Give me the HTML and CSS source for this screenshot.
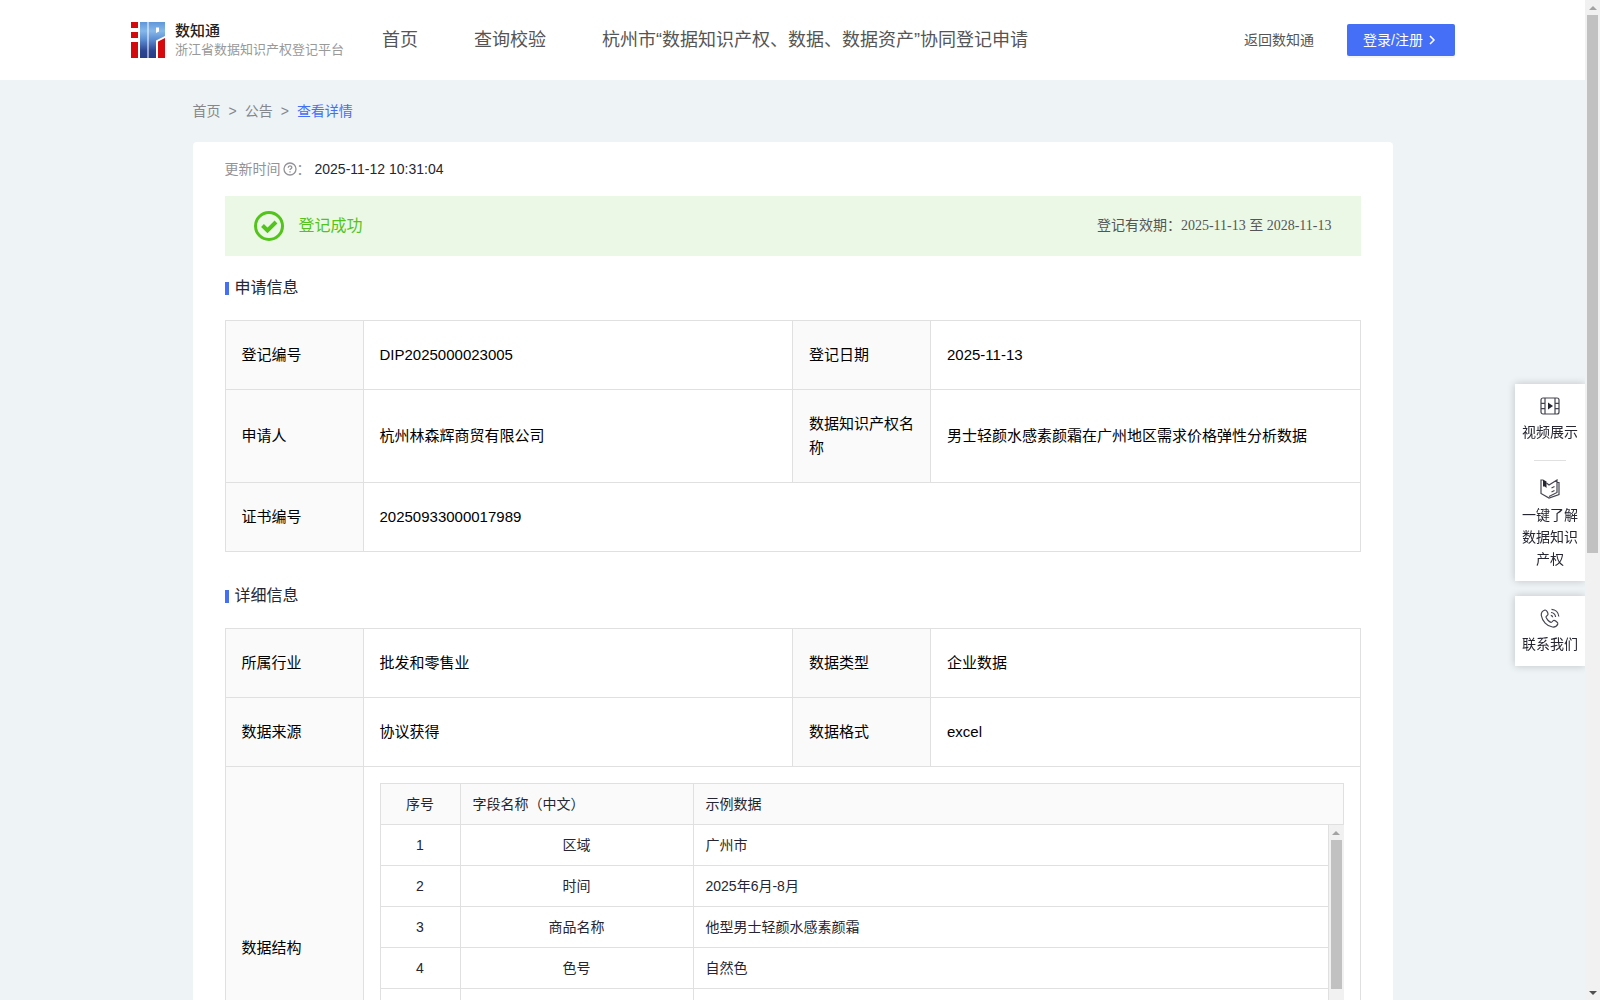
FILE: index.html
```html
<!DOCTYPE html>
<html lang="zh-CN">
<head>
    <meta charset="UTF-8">
    <meta name="viewport" content="width=device-width, initial-scale=1.0">
    <title>数知通 - 查看详情</title>
    <link rel="stylesheet" href="styles.css">
</head>
<body>
    <div class="page">
        <header class="header">
            <a class="logo" href="#">
                <svg class="logo-mark" viewBox="0 0 34 36" aria-hidden="true">
                    <defs>
                        <linearGradient id="blue" gradientUnits="userSpaceOnUse" x1="0" y1="0" x2="0" y2="36">
                            <stop offset="0" stop-color="#5f97d8"/>
                            <stop offset="0.25" stop-color="#86b8ea"/>
                            <stop offset="0.5" stop-color="#5a8bd0"/>
                            <stop offset="0.8" stop-color="#2c4592"/>
                            <stop offset="1" stop-color="#263c86"/>
                        </linearGradient>
                    </defs>
                    <path fill="#d40a0f" d="M0 0h7v6H0zM0 10h7v6H0zM0 20h7v16H0zM27 19.500l7-3.500v20h-7z"/>
                    <path fill="url(#blue)" d="M9 0h7.500v36H9z"/>
                    <path fill="url(#blue)" fill-rule="evenodd" d="M17.500 0H34v14l-9 4.500V36h-7.500zM25 5.500v5.500l3-1.500v-4z"/>
                </svg>
                <span class="logo-text">
                    <strong>数知通</strong>
                    <small>浙江省数据知识产权登记平台</small>
                </span>
            </a>
            <nav class="nav">
                <a href="#">首页</a>
                <a href="#">查询校验</a>
                <a href="#">杭州市“数据知识产权、数据、数据资产”协同登记申请</a>
            </nav>
            <a class="back" href="#">返回数知通</a>
            <button class="login" type="button">
                登录/注册
                <svg viewBox="0 0 12 12" aria-hidden="true"><path d="M3 2l4 4-4 4"/></svg>
            </button>
        </header>

        <div class="wrap">
            <nav class="breadcrumb">
                <a href="#">首页</a><span>&gt;</span><a href="#">公告</a><span>&gt;</span><a class="current" href="#">查看详情</a>
            </nav>

            <main class="card">
                <div class="update">
                    <span class="update-label">更新时间<svg viewBox="0 0 14 14" aria-hidden="true"><circle cx="7" cy="7" r="6"/><path d="M5.200 5.800c0-2.400 3.600-2.400 3.600-.2 0 1.200-1.800 1.200-1.800 2.500M7 9.300v1.200"/></svg>：</span>
                    <time>2025-11-12 10:31:04</time>
                </div>

                <div class="status">
                    <svg viewBox="0 0 30 30" aria-hidden="true"><circle cx="15" cy="15" r="13.500"/><path class="tick" d="M8.500 14.500l5 5 8.500-8.500"/></svg>
                    <strong>登记成功</strong>
                    <span class="validity">登记有效期：2025-11-13 至 2028-11-13</span>
                </div>

                <h2>申请信息</h2>
                <table class="info">
                    <tr>
                        <th scope="row">登记编号</th>
                        <td>DIP2025000023005</td>
                        <th scope="row">登记日期</th>
                        <td>2025-11-13</td>
                    </tr>
                    <tr>
                        <th scope="row">申请人</th>
                        <td>杭州林森辉商贸有限公司</td>
                        <th scope="row">数据知识产权名称</th>
                        <td>男士轻颜水感素颜霜在广州地区需求价格弹性分析数据</td>
                    </tr>
                    <tr>
                        <th scope="row">证书编号</th>
                        <td colspan="3">20250933000017989</td>
                    </tr>
                </table>

                <h2>详细信息</h2>
                <table class="info">
                    <tr>
                        <th scope="row">所属行业</th>
                        <td>批发和零售业</td>
                        <th scope="row">数据类型</th>
                        <td>企业数据</td>
                    </tr>
                    <tr>
                        <th scope="row">数据来源</th>
                        <td>协议获得</td>
                        <th scope="row">数据格式</th>
                        <td>excel</td>
                    </tr>
                    <tr>
                        <th scope="row">数据结构</th>
                        <td class="nested" colspan="3">
                            <table class="fields">
                                <tr><th scope="col">序号</th><th scope="col">字段名称（中文）</th><th scope="col">示例数据</th></tr>
                            </table>
                            <div class="fields-body">
                                <table class="fields">
                                    <tr><td>1</td><td>区域</td><td>广州市</td></tr>
                                    <tr><td>2</td><td>时间</td><td>2025年6月-8月</td></tr>
                                    <tr><td>3</td><td>商品名称</td><td>他型男士轻颜水感素颜霜</td></tr>
                                    <tr><td>4</td><td>色号</td><td>自然色</td></tr>
                                    <tr><td></td><td></td><td></td></tr>
                                    <tr><td></td><td></td><td></td></tr>
                                    <tr><td></td><td></td><td></td></tr>
                                </table>
                                <div class="scrollbar" aria-hidden="true">
                                    <i class="arrow-up"></i>
                                    <div class="track"><div class="thumb thumb-fields"></div></div>
                                    <i class="arrow-down"></i>
                                </div>
                            </div>
                        </td>
                    </tr>
                </table>
            </main>
        </div>

        <aside class="side">
            <div class="side-box">
                <a href="#">
                    <svg viewBox="0 0 20 20" aria-hidden="true">
                        <rect x="1" y="2" width="18" height="16" rx="2"/>
                        <path d="M5 2v16M15 2v16M1 7.300h4M1 12.700h4M15 7.300h4M15 12.700h4"/>
                        <path class="solid" d="M8 6.500l5 3.500-5 3.500z"/>
                    </svg>
                    视频展示
                </a>
                <hr>
                <a href="#">
                    <svg viewBox="0 0 20 20" aria-hidden="true">
                        <path d="M3 1H1v13.500l8 4.500 10-3.500V3.500h-2M6.500 4L9 6l8-5v12.500L9 17.500M11.500 9l3-1.500M11.500 13l3-1.500"/>
                        <path class="solid" d="M3 .5l3.500 2V9L4.800 7.500 3 7.500z"/>
                    </svg>
                    一键了解数据知识产权
                </a>
            </div>
            <div class="side-box">
                <a href="#">
                    <svg viewBox="0 0 20 20" aria-hidden="true">
                        <path d="M5 2C2 3 1 5 1.300 7.500 2.200 13 7 18.300 12.500 19c2.500.2 4.500-.8 5.300-3 .4-1.500-3-4-4.300-3.500-1.200.5-1.300 2-2.500 1.800C9 13.800 6.500 11 6 9.200c-.2-1.300 1.800-1.500 2-2.700C8.200 5 6.500 1.800 5 2z"/>
                        <path d="M11 4.500c2.500.2 4.300 2 4.600 4.500M11.500 1.300c4 .2 7 3 7.300 7.200M10.800 7.300c1 .1 1.800.9 1.900 2"/>
                    </svg>
                    联系我们
                </a>
            </div>
        </aside>
    </div>

    <div class="scrollbar" aria-hidden="true">
        <i class="arrow-up"></i>
        <div class="track"><div class="thumb thumb-page"></div></div>
        <i class="arrow-down"></i>
    </div>
</body>
</html>
```
FILE: styles.css
```css
* {
    margin: 0;
    padding: 0;
    box-sizing: border-box;
}

body {
    display: flex;
    height: 100vh;
    overflow: hidden;
    font-family: "Liberation Sans", "Noto Sans CJK SC", sans-serif;
    font-size: 14px;
    line-height: 22px;
    color: #252631;
    background: #eef3f6;
}

a {
    color: inherit;
    text-decoration: none;
}

table {
    width: 100%;
    border-collapse: collapse;
    table-layout: fixed;
}

th {
    font-weight: 400;
    text-align: left;
}

.page {
    flex: 1;
    min-width: 0;
    overflow-y: auto;
}

/* scrollbars */
.scrollbar {
    display: flex;
    flex-direction: column;
    align-items: center;
    flex: none;
    width: 15px;
    background: #f1f1f1;
    position: relative;
    z-index: 1;
}

.arrow-up,
.arrow-down {
    display: flex;
    align-items: center;
    justify-content: center;
    width: 15px;
    height: 15px;
}

.arrow-up::before,
.arrow-down::before {
    content: "";
    border: 4px solid transparent;
    border-top-width: 0;
    border-bottom: 4px solid #a3a3a3;
}

.arrow-down::before {
    border-top: 4px solid #505050;
    border-bottom-width: 0;
}

.track {
    flex: 1;
    width: 11px;
}

.thumb {
    background: #c1c1c1;
}

.thumb-page {
    height: 55.5%;
}

.thumb-fields {
    height: 58%;
}

/* header */
.header {
    display: flex;
    align-items: center;
    height: 80px;
    padding: 0 130px;
    color: #555;
    background: #fff;
}

.logo {
    display: flex;
    align-items: center;
    gap: 10px;
    width: 252px;
    padding-left: 1px;
}

.logo-mark {
    width: 34px;
    height: 36px;
    flex: none;
}

.logo-text {
    display: flex;
    flex-direction: column;
    white-space: nowrap;
}

.logo-text strong {
    font-size: 15px;
    font-weight: 500;
    line-height: 20px;
    color: #222;
}

.logo-text small {
    font-size: 13px;
    line-height: 18px;
    color: #999;
}

.nav {
    display: flex;
    gap: 56px;
    flex: 1;
    font-size: 18px;
    white-space: nowrap;
}

.back {
    margin-right: 33px;
    white-space: nowrap;
}

.login {
    display: flex;
    align-items: center;
    justify-content: center;
    gap: 4px;
    width: 108px;
    height: 32px;
    border: 0;
    border-radius: 2px;
    font: inherit;
    color: #fff;
    background: #446ff6;
    box-shadow: 0 2px 0 rgba(0, 0, 0, 0.04);
}

.login svg {
    width: 12px;
    height: 12px;
    fill: none;
    stroke: #fff;
    stroke-width: 1.5;
}

/* content */
.wrap {
    max-width: 1200px;
    margin: 0 auto;
}

.breadcrumb {
    padding: 20px 0;
    color: #85878c;
}

.breadcrumb span {
    margin: 0 8px;
}

.breadcrumb .current {
    color: #446ff6;
}

.card {
    padding: 16px 32px 40px;
    border-radius: 4px;
    background: #fff;
}

.update {
    display: flex;
    gap: 4px;
    margin-bottom: 16px;
}

.update-label {
    display: flex;
    align-items: center;
    color: #929297;
}

.update svg {
    width: 14px;
    height: 14px;
    margin-left: 2px;
    fill: none;
    stroke: #929297;
    stroke-width: 1.3;
}

.status {
    display: flex;
    align-items: center;
    gap: 15px;
    height: 60px;
    padding: 0 29px;
    background: #ebf8e6;
}

.status svg {
    width: 30px;
    height: 30px;
    fill: none;
    stroke: #52c41a;
    stroke-width: 3;
}

.status .tick {
    stroke-width: 4;
}

.status strong {
    font-size: 16px;
    font-weight: 400;
    color: #52c41a;
}

.validity {
    margin-left: auto;
    font-family: "Liberation Serif", "Noto Sans CJK SC", serif;
    color: #555;
}

h2 {
    display: flex;
    align-items: center;
    gap: 6px;
    margin: 20px 0;
    font-size: 16px;
    font-weight: 400;
    line-height: 24px;
}

h2::before {
    content: "";
    width: 4px;
    height: 13px;
    background: #446ff6;
}

.info {
    font-size: 15px;
    line-height: 24px;
    color: #000;
}

.info + h2 {
    margin-top: 32px;
}

.info th,
.info td {
    padding: 22px 16px;
    border: 1px solid #e0e0e0;
}

.info th {
    width: 138px;
    background: #fafafa;
}

.info .nested {
    padding: 16px;
}

.fields {
    font-size: 14px;
    line-height: 24px;
    color: #252631;
}

.info .fields th,
.info .fields td {
    height: 41px;
    padding: 8px 12px;
}

.info .fields th:first-child,
.info .fields td:first-child {
    width: 80px;
    text-align: center;
}

.info .fields th:nth-child(2),
.info .fields td:nth-child(2) {
    width: 233px;
}

.info .fields th:last-child,
.info .fields td:last-child {
    width: auto;
}

.fields td:nth-child(2) {
    text-align: center;
}

.fields-body {
    display: flex;
    height: 287px;
    overflow: hidden;
}

.fields-body .fields {
    flex: 1;
}

.info .fields-body tr:first-child td {
    height: 40px;
    border-top: 0;
}

/* floating links */
.side {
    position: fixed;
    top: 384px;
    right: 15px;
    display: flex;
    flex-direction: column;
    gap: 15px;
    width: 70px;
}

.side-box {
    padding: 12px 7px 11px;
    background: #fff;
    box-shadow: 0 0 8px rgba(0, 0, 0, 0.2);
}

.side-box a {
    display: flex;
    flex-direction: column;
    align-items: center;
    gap: 5px;
    text-align: center;
}

.side-box svg {
    width: 20px;
    height: 20px;
    fill: none;
    stroke: #444550;
    stroke-width: 1.2;
}

.side-box .solid {
    fill: #252631;
    stroke: none;
}

.side-box hr {
    width: 32px;
    margin: 17px auto 18px;
    border: 0;
    border-top: 1px solid #e0e0e0;
}
```
